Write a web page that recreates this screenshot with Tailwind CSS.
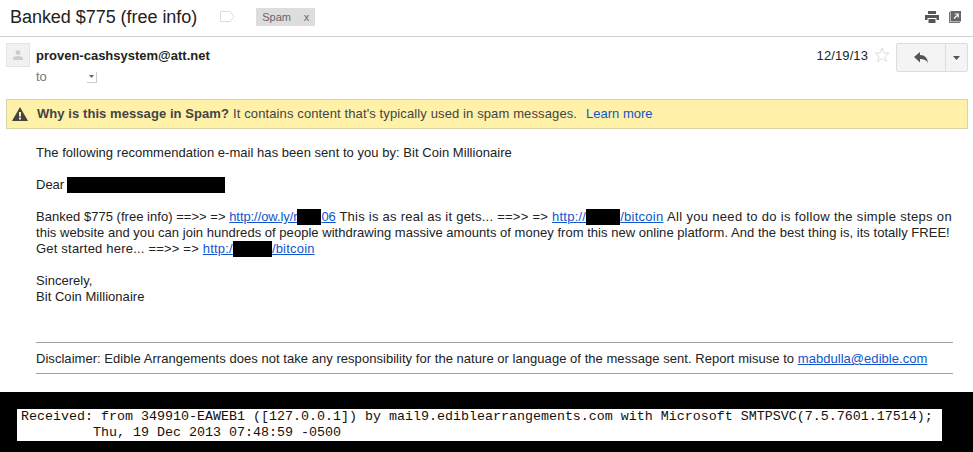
<!DOCTYPE html>
<html lang="en">
<head>
  <meta charset="UTF-8">
  <title>Banked $775 (free info)</title>
  <script src="https://cdn.jsdelivr.net/npm/@tailwindcss/browser@4"></script>
</head>
<body class="bg-white w-[973px] h-[452px] overflow-hidden font-['Liberation_Sans',Arial,sans-serif] text-[#222]">

  <!-- subject bar -->
  <div class="h-[37px] border-b border-[#cfcfcf] flex items-center pl-[10px] pr-[12px] pb-[3px]">
    <h1 class="text-[18px] leading-[24px] text-[#222] tracking-[-0.04px]">Banked $775 (free info)</h1>
    <svg class="ml-[23px]" width="15" height="11" viewBox="0 0 15 11"><path d="M.5.5h9.500l4 5-4 5H.5z" fill="#fff" stroke="#ddd"/></svg>
    <span class="ml-[21px] h-[18px] w-[59px] bg-[#dddddd] text-[#666] text-[11px] leading-[18px] pl-[6px] flex justify-between pr-[6px]"><span>Spam</span><span>x</span></span>
    <div class="ml-auto flex items-center gap-[10px]">
      <svg width="14" height="12" viewBox="0 0 14 12"><path d="M3 0h8v3H3zM0 4h14v5h-2.500V7h-9v2H0zM3.500 8h7v4h-7z" fill="#555"/></svg>
      <svg width="12" height="12" viewBox="0 0 12 12"><path d="M0 1h1v10h10v1H0z" fill="#777"/><path d="M1.500 0H12v10.500H1.500z" fill="#666"/><path d="M5 7.500l3.700-3.700M5.800 3h3.400v3.400" fill="none" stroke="#fff" stroke-width="1.200"/></svg>
    </div>
  </div>

  <!-- sender row -->
  <div class="h-[62px] flex pl-[6px] pr-[5px] pt-[6px]">
    <div class="w-[24px] h-[24px] bg-[#f1f1f1] border border-[#e4e4e4] flex items-center justify-center">
      <svg width="10" height="10" viewBox="0 0 10 10"><circle cx="5" cy="2.600" r="2.400" fill="#ccc"/><path d="M0 10V8.300C0 6.800 2.500 6 5 6s5 .8 5 2.300V10z" fill="#ccc"/></svg>
    </div>
    <div class="ml-[6px]">
      <div class="text-[13px] leading-[24px] font-bold text-[#222] pt-[1px]">proven-cashsystem@att.net</div>
      <div class="flex items-center h-[16px] mt-[1px] text-[13px] text-[#777]">
        <span>to</span>
        <span class="ml-[40px] w-[10px] h-[11px] border-r border-b border-[#ccc] flex items-center justify-center">
          <svg width="5" height="3" viewBox="0 0 5 3"><path d="M0 0h5L2.500 3z" fill="#666"/></svg>
        </span>
      </div>
    </div>
    <div class="ml-auto flex items-start">
      <span class="text-[13px] leading-[24px] pt-[1px] text-[#222] tracking-[0.1px]">12/19/13</span>
      <svg class="ml-[6px] mt-[4px]" width="16" height="16" viewBox="0 0 16 16"><path d="M8 1l1.900 4.800 5.100.3-4 3.300 1.300 5L8 11.600l-4.300 2.800 1.300-5-4-3.300 5.100-.3z" fill="none" stroke="#ddd"/></svg>
      <div class="ml-[6px] h-[29px] flex bg-[#f4f4f4] border border-[#ddd] rounded-[2px]">
        <div class="w-[49px] flex items-center justify-center border-r border-[#ddd]">
          <svg width="14" height="11" viewBox="0 0 14 11"><path d="M6 0v3c5 0 7.500 3 8 8-1.500-3-4-4-8-4v3.500L0 5z" fill="#555"/></svg>
        </div>
        <div class="w-[21px] flex items-center justify-center">
          <svg width="7" height="4" viewBox="0 0 7 4"><path d="M0 0h7L3.500 4z" fill="#555"/></svg>
        </div>
      </div>
    </div>
  </div>

  <!-- spam notice -->
  <div class="ml-[6px] mr-[5px] h-[30px] bg-[#fff1a8] border border-[#d9d3a8] flex items-center pl-[5px] text-[13px] text-[#444]">
    <svg width="16" height="14" viewBox="0 0 16 14"><path fill-rule="evenodd" d="M8 0l8 14H0zM7 5v4.500h2V5zM7 10.500v2h2v-2z" fill="#444"/></svg>
    <span class="ml-[9px] font-bold tracking-[0.07px]">Why is this message in Spam?</span>
    <span class="ml-[4px] tracking-[0.12px]">It contains content that's typically used in spam messages.</span>
    <a class="ml-[9px] text-[#15c]">Learn more</a>
  </div>

  <!-- message body -->
  <div class="pl-[36px] pr-[20px] pt-[16px] text-[13px] leading-[16px] text-[#222]">
    <p class="tracking-[0.04px]">The following recommendation e-mail has been sent to you by: Bit Coin Millionaire</p>
    <p class="mt-[16px]">Dear <span class="inline-block align-top w-[158px] h-[16px] bg-black ml-[-1px]"></span></p>
    <p class="mt-[16px] whitespace-nowrap"><span class="tracking-[0.03px]">Banked $775 (free info) ==&gt;&gt; =&gt;</span> <a class="text-[#15c] underline tracking-[-0.08px]">http://ow.ly/r<span class="inline-block align-top w-[24px] h-[16px] bg-black"></span>06</a> <span class="tracking-[0.25px]">This is as real as it gets... ==&gt;&gt; =&gt; <a class="text-[#15c] underline">http://<span class="inline-block align-top w-[34px] h-[16px] bg-black"></span>/bitcoin</a></span> <span class="tracking-[0.32px]">All you need to do is follow the simple steps on</span><br><span class="tracking-[0.03px]">this website and you can join hundreds of people withdrawing massive amounts of money from this new online platform. And the best thing is, its totally FREE!</span><br><span class="tracking-[0.2px]">Get started here... ==&gt;&gt; =&gt; <a class="text-[#15c] underline">http:/<span class="inline-block align-top w-[39px] h-[16px] bg-black"></span>/bitcoin</a></span></p>
    <p class="mt-[16px] tracking-[0.04px]">Sincerely,<br>Bit Coin Millionaire</p>
    <div class="mt-[37px] border-t border-b border-[#a0a0a0] h-[32px] leading-[32px] tracking-[0.04px]">Disclaimer: Edible Arrangements does not take any responsibility for the nature or language of the message sent. Report misuse to <a class="text-[#15c] underline">mabdulla@edible.com</a></div>
  </div>

  <!-- pasted header -->
  <div class="mt-[18px] h-[60px] bg-black pt-[17px] pl-[17px] pr-[31px]">
    <pre class="h-[32px] bg-white pl-[4px] font-['Liberation_Mono','Courier_New',monospace] text-[13.33px] leading-[16px] text-[#111]">Received: from 349910-EAWEB1 ([127.0.0.1]) by mail9.ediblearrangements.com with Microsoft SMTPSVC(7.5.7601.17514);
         Thu, 19 Dec 2013 07:48:59 -0500</pre>
  </div>
</body>
</html>
